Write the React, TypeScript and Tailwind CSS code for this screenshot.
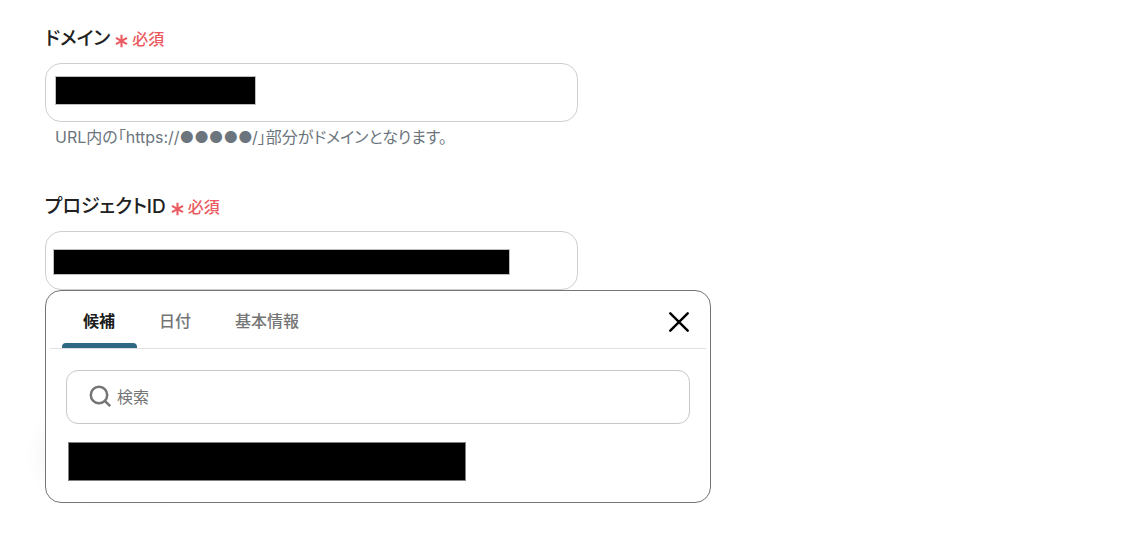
import { useState } from "react";

const TABS = ["候補", "日付", "基本情報"];

function Required() {
  return (
    <span className="flex items-center gap-1 text-base leading-6 font-medium text-[#eb5a60]">
      <svg width="13" height="14" viewBox="0 0 13 14" fill="none" stroke="currentColor" strokeWidth="2.1" className="mt-1" aria-hidden="true">
        <path d="M6.5 .7v12.6M1 3.8l11 6.4M12 3.8L1 10.2" />
      </svg>
      必須
    </span>
  );
}

function Field({ id, label, mask }: { id: string; label: string; mask: string }) {
  return (
    <div className="max-w-[533px]">
      <label htmlFor={id} className="flex h-7 items-center gap-[5px] text-[19px] font-medium text-[#212121]">
        <span>{label}</span>
        <Required />
      </label>
      <div className="relative mt-[10px]">
        <input id={id} type="text" className="block h-[59px] w-full rounded-2xl border border-[#cccfd2] bg-white px-3 outline-none" />
        <span className={`absolute bg-black outline outline-[#808080]/50 ${mask}`} />
      </div>
    </div>
  );
}

function SuggestionPanel() {
  const [active, setActive] = useState(0);
  return (
    <div className="relative max-w-[666px]">
      <div className="absolute bottom-5 left-1 h-14 w-40 rounded-full shadow-[0_0_24px_4px_rgba(0,40,30,0.08)]" />
      <section className="relative rounded-2xl border border-[#757575] bg-white px-1 pb-[21px]">
        <div className="flex h-[58px] items-stretch justify-between border-b border-[#e0e0e0] pr-[17px] pl-3">
          <div role="tablist" className="flex gap-px">
            {TABS.map((tab, i) => (
              <button
                key={tab}
                type="button"
                role="tab"
                aria-selected={i === active}
                onClick={() => setActive(i)}
                className={`relative pt-[6px] pr-[22px] pb-1 pl-[21px] text-base ${i === active ? "font-bold text-[#1c1c1c]" : "font-medium text-[#757575]"}`}
              >
                {tab}
                {i === active && <span className="absolute inset-x-0 bottom-0 h-[5px] rounded-t bg-[#2f6883]" />}
              </button>
            ))}
          </div>
          <button type="button" aria-label="閉じる" className="pt-1 text-black">
            <svg width="20" height="20" viewBox="0 0 20 20" fill="none" stroke="currentColor" strokeWidth="2.4" strokeLinecap="round">
              <path d="M1.3 1.3l17.4 17.4M18.7 1.3L1.3 18.7" />
            </svg>
          </button>
        </div>
        <div className="mx-4 mt-[21px] flex h-[54px] items-center gap-1 rounded-xl border border-[#c8c8c8] px-[22px]">
          <svg width="24" height="24" viewBox="0 0 24 24" fill="none" stroke="#757575" strokeWidth="2.5" className="shrink-0" aria-hidden="true">
            <circle cx="10" cy="10" r="8.2" />
            <path d="M15.8 15.8l5.4 5.4" />
          </svg>
          <input type="search" aria-label="検索" placeholder="検索" className="min-w-0 flex-1 bg-transparent text-base outline-none placeholder:text-[#757575]" />
        </div>
        <div className="mt-[18px] ml-[18px] h-[39px] max-w-[398px] border border-[#808080] bg-black" />
      </section>
    </div>
  );
}

export default function App() {
  return (
    <main className="min-h-screen bg-white px-[45px] pt-[25px] pb-9 font-['Inter','Noto_Sans_CJK_JP',sans-serif] [font-feature-settings:'palt']" lang="ja">
      <Field id="domain" label="ドメイン" mask="left-[11px] top-[14px] h-[27px] w-[199px]" />
      <p className="mt-[3px] pl-[10px] text-base leading-6 text-[#6c757d]">
        URL内の「https://●●●●●/」部分がドメインとなります。
      </p>
      <div className="mt-11">
        <Field id="project-id" label="プロジェクトID" mask="left-[9px] top-[19px] h-[24px] w-[455px]" />
        <SuggestionPanel />
      </div>
    </main>
  );
}
